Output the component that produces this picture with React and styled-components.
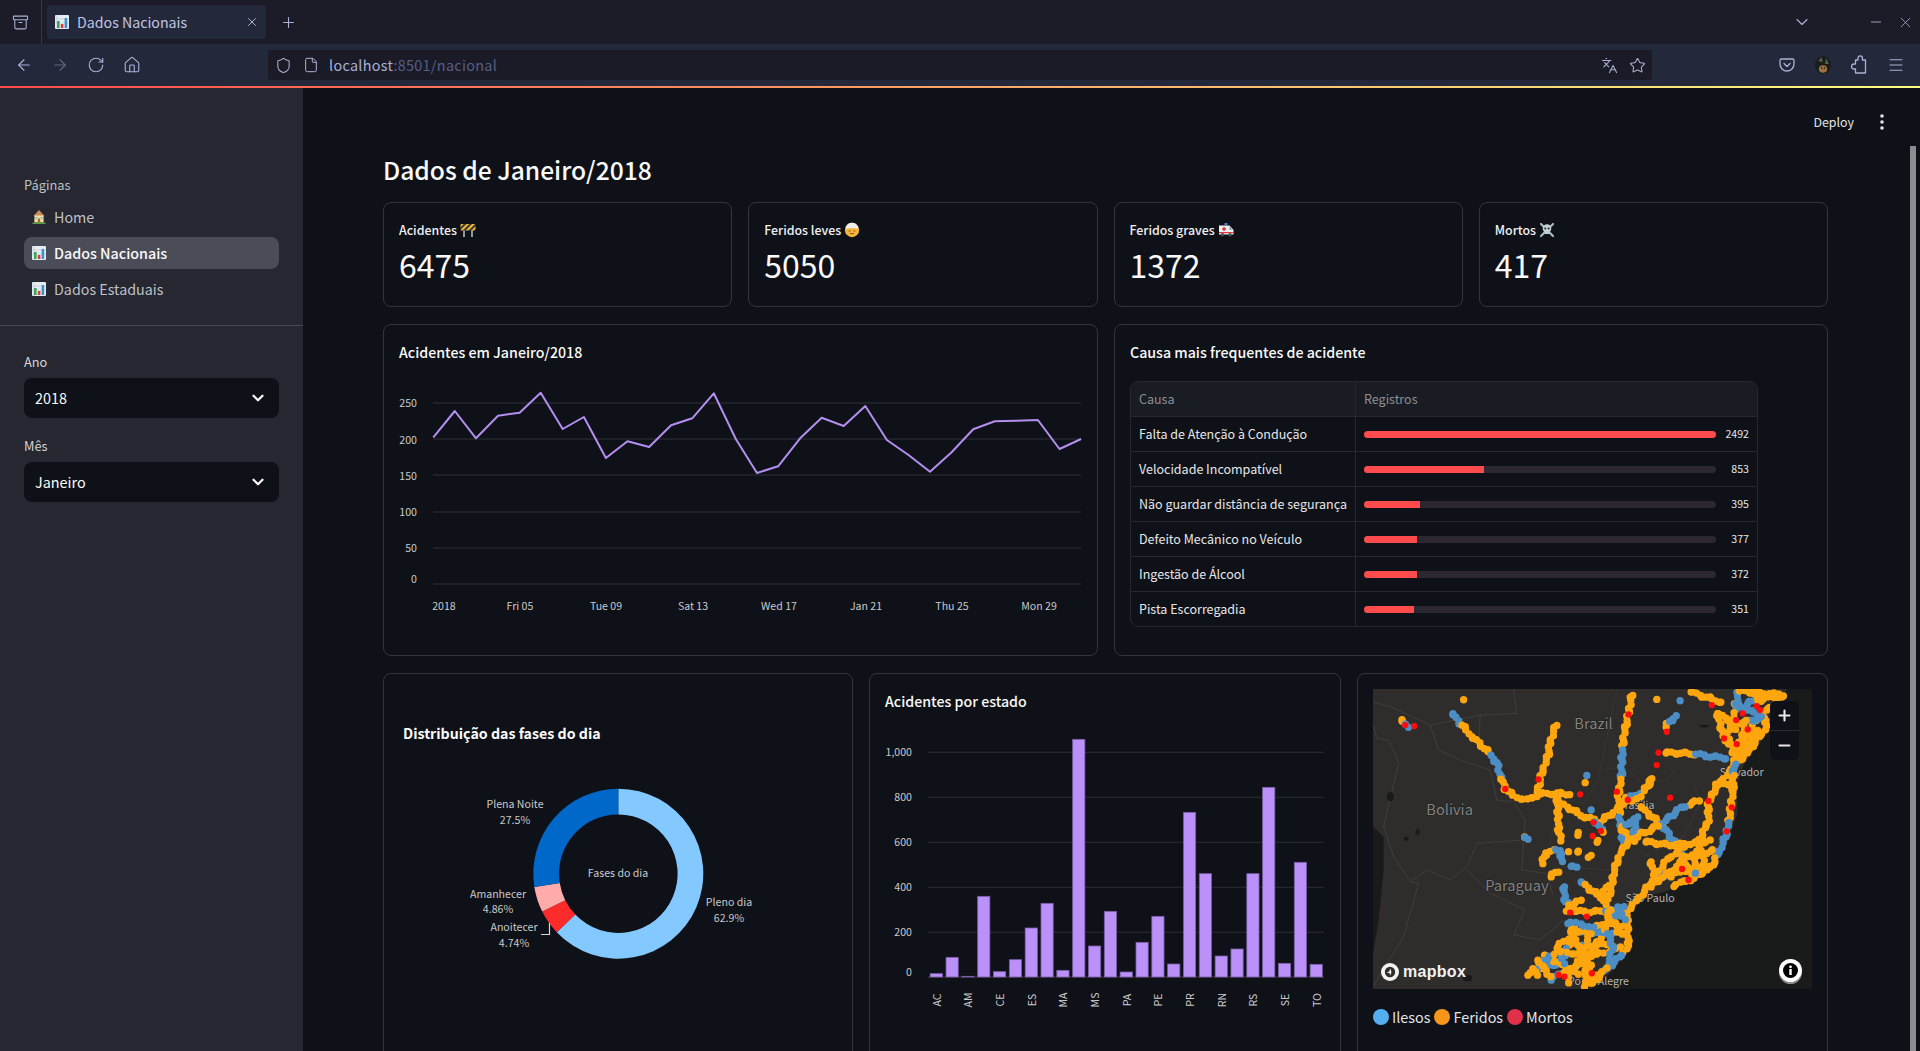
import React from 'react';
import styled, { createGlobalStyle } from 'styled-components';
import {
  ArrowLeft, ArrowRight, RotateCw, Home, Shield, File, Languages, Star,
  Menu, X, Plus, Minus, ChevronDown, Archive,
} from 'lucide-react';

const SANS = '"Noto Sans CJK SC", "Noto Sans", sans-serif';

const GlobalStyle = createGlobalStyle`
  html, body {
    margin: 0;
    height: 100%;
    overflow: hidden;
    background: #0e1117;
    font-family: ${SANS};
  }
`;

const Window = styled.div`
  display: flex;
  flex-direction: column;
  height: 100vh;
  overflow: hidden;
  color: #fafafa;
`;

/* browser chrome */
const TabBar = styled.div`
  display: flex;
  align-items: center;
  height: 44px;
  background: #1b1c28;
  color: #a9b1d6;
`;

const TabBarSide = styled.div`
  display: flex;
  align-items: center;
  justify-content: center;
  width: 42px;
  height: 100%;
  border-right: 1px solid #343747;
  margin-right: 5px;
  box-sizing: border-box;
`;

const Tab = styled.div`
  display: flex;
  align-items: center;
  gap: 7px;
  width: 219px;
  height: 34px;
  padding: 0 7px 0 7px;
  box-sizing: border-box;
  border-radius: 3px;
  background: #23283b;
  font-size: 14.2px;
  line-height: 20px;
  color: #c0c6e4;
`;

const TabTitle = styled.span`
  flex: 1;
  margin-top: -1px;
`;

const NewTab = styled.div`
  display: flex;
  margin-left: 14px;
`;

const WindowControls = styled.div`
  margin-left: auto;
  display: flex;
  align-items: center;
  padding-right: 6px;
`;

const WindowSlot = styled.span`
  display: flex;
  margin-left: ${p => p.$gap}px;
`;

const Toolbar = styled.div`
  display: flex;
  align-items: center;
  height: 42px;
  background: #24283b;
  color: #a9b1d6;
`;

const NavButtons = styled.div`
  display: flex;
  align-items: center;
  gap: 18px;
  padding-left: 15px;
  width: 268px;
  box-sizing: border-box;
`;

const NavButton = styled.span`
  display: flex;
  opacity: ${p => (p.$off ? 0.45 : 1)};
`;

const UrlBar = styled.div`
  display: flex;
  align-items: center;
  width: 1384px;
  height: 30px;
  padding: 0 6px 0 7px;
  box-sizing: border-box;
  border-radius: 3px;
  background: #1a1b26;
  font-size: 14.4px;
  letter-spacing: 0.3px;
`;

const UrlGap = styled.span`
  width: 11px;
`;

const UrlHost = styled.span`
  margin: -2px 0 0 10px;
  color: #a9b1d6;
`;

const UrlRest = styled.span`
  color: #565f89;
`;

const UrlActions = styled.div`
  margin-left: auto;
  display: flex;
  align-items: center;
  gap: 11px;
`;

const ToolbarRight = styled.div`
  margin-left: auto;
  display: flex;
  align-items: center;
  gap: 20px;
  padding-right: 15px;
`;

const Gradient = styled.div`
  height: 2px;
  background: linear-gradient(90deg, #ff4b4b, #fffd80);
`;

/* streamlit page */
const Body = styled.div`
  flex: 1;
  min-height: 0;
  display: flex;
`;

const Sidebar = styled.aside`
  flex: 0 0 303px;
  padding-top: 87px;
  box-sizing: border-box;
  background: #262730;
`;

const SideSection = styled.div`
  padding: 0 24px;
`;

const SideLabel = styled.div`
  margin-bottom: 6px;
  font-size: 12.8px;
  line-height: 20px;
  color: ${p => (p.$muted ? '#bfc0c5' : '#d5d6da')};
`;

const NavList = styled.nav`
  display: flex;
  flex-direction: column;
  gap: 4px;
`;

const NavItem = styled.div`
  display: flex;
  align-items: center;
  gap: 7px;
  height: 32px;
  padding-left: 7px;
  border-radius: 8px;
  background: ${p => (p.$active ? '#4a4c58' : 'transparent')};
  color: ${p => (p.$active ? '#fafafa' : '#bfc1c7')};
  font-size: 14.3px;
  font-weight: ${p => (p.$active ? 500 : 400)};
`;

const NavText = styled.span`
  margin-top: -2px;
`;

const SideDivider = styled.div`
  height: 1px;
  margin: 20px 0 26px;
  background: #4a4b55;
`;

const SelectBox = styled.div`
  display: flex;
  align-items: center;
  justify-content: space-between;
  height: 40px;
  margin-bottom: 18px;
  padding: 0 12px 0 11px;
  border-radius: 8px;
  background: #0e1117;
  font-size: 14.4px;
  color: #fafafa;
`;

const SelectValue = styled.span`
  margin-top: -2px;
`;

const Main = styled.main`
  position: relative;
  flex: 1;
  min-width: 0;
  padding: 61px 92px 0 80px;
  box-sizing: border-box;
`;

const TopActions = styled.div`
  position: absolute;
  top: 22px;
  right: 36px;
  display: flex;
  align-items: center;
  gap: 26px;
  font-size: 12.4px;
  line-height: 24px;
  color: #e3e3e6;
`;

const Scrollbar = styled.div`
  position: absolute;
  top: 58px;
  right: 4px;
  bottom: 0;
  width: 6px;
  background: #8c8d90;
`;

const PageTitle = styled.h1`
  margin: 0 0 13px;
  font-size: 24.6px;
  line-height: 40px;
  font-weight: 500;
`;

const Row = styled.div`
  display: grid;
  grid-template-columns: repeat(${p => p.$cols}, 1fr);
  gap: 16px;
  margin-bottom: 17px;
`;

const Card = styled.section`
  height: ${p => p.$height}px;
  padding: 15px;
  box-sizing: border-box;
  border: 1px solid #33353b;
  border-radius: 8px;
`;

const MetricLabel = styled.div`
  display: flex;
  align-items: center;
  gap: 3px;
  margin-top: 1px;
  font-size: 12.4px;
  line-height: 22px;
  font-weight: 500;
  color: #f0f0f2;
`;

const MetricValue = styled.div`
  font-size: 32px;
  line-height: 46px;
`;

const CardTitle = styled.h3`
  margin: ${p => p.$top || 0}px 0 0 ${p => p.$left || 0}px;
  font-size: 14.2px;
  line-height: 24px;
  font-weight: ${p => p.$weight || 500};
`;

const ChartSvg = styled.svg`
  display: block;
  margin-top: ${p => p.$top}px;
  font-family: ${SANS};
`;

const AxisText = styled.text`
  font-size: 10.6px;
  fill: #c9cace;
`;

/* table with progress bars */
const Table = styled.div`
  width: 626px;
  margin-top: 17px;
  border: 1px solid #26282e;
  border-radius: 8px;
  overflow: hidden;
`;

const TableRow = styled.div`
  display: grid;
  grid-template-columns: 224px 1fr;
  height: ${p => (p.$head ? 34 : 35)}px;
  box-sizing: border-box;
  border-top: ${p => (p.$head ? 0 : '1px solid #26282e')};
  background: ${p => (p.$head ? '#1a1c24' : 'transparent')};
  font-size: 12.5px;
  color: ${p => (p.$head ? '#8d8e93' : '#e6e7ea')};
`;

const TableCell = styled.div`
  display: flex;
  align-items: center;
  min-width: 0;
  padding: 0 8px;
  white-space: nowrap;
  border-left: ${p => (p.$second ? '1px solid #26282e' : 0)};
`;

const CellText = styled.span`
  margin-top: -2px;
`;

const BarTrack = styled.div`
  flex: 0 0 352px;
  height: 7px;
  border-radius: 4px;
  overflow: hidden;
  background: #2b2831;
`;

const BarFill = styled.div`
  height: 100%;
  background: #ff4b4b;
`;

const BarValue = styled.span`
  flex: 1;
  margin-top: -1px;
  text-align: right;
  font-size: 10.6px;
`;

/* map */
const MapBox = styled.div`
  position: relative;
  width: 439px;
  height: 300px;
  overflow: hidden;
  background: #191a1a;
`;

const MapSvg = styled.svg`
  display: block;
  font-family: ${SANS};
`;

const ZoomControls = styled.div`
  position: absolute;
  top: 12px;
  right: 13px;
  display: flex;
  flex-direction: column;
  width: 29px;
  border-radius: 5px;
  background: #0e1117;
  color: #e8e8e8;
`;

const ZoomButton = styled.div`
  display: flex;
  align-items: center;
  justify-content: center;
  height: 29px;
  & + & {
    border-top: 1px solid #2a2c31;
  }
`;

const MapLogo = styled.div`
  position: absolute;
  left: 8px;
  bottom: 8px;
  display: flex;
  align-items: center;
  gap: 4px;
  font-family: "Liberation Sans", sans-serif;
  font-size: 16px;
  font-weight: 700;
  line-height: 18px;
  letter-spacing: 0.3px;
  color: #f2f2f2;
`;

const MapInfo = styled.div`
  position: absolute;
  right: 10px;
  bottom: 7px;
  display: flex;
  border-radius: 50%;
  box-shadow: 0 2px 0 #8b8b8b;
`;

const Legend = styled.div`
  display: flex;
  align-items: center;
  margin-top: 20px;
  font-size: 14.4px;
  line-height: 16px;
  color: #e4e4e6;
`;

const LegendDot = styled.span`
  width: 16px;
  height: 16px;
  margin: 0 3px 0 ${p => (p.$first ? 0 : 4)}px;
  border-radius: 50%;
  background: ${p => p.$color};
`;

/* emoji, drawn */
const ChartEmoji = ({ size = 16 }) => (
  <svg width={size} height={size} viewBox="0 0 16 16">
    <rect x="1" y="1" width="14" height="14" rx="1" fill="#e6edf1" />
    <path d="M3 1v14M1 5h14M1 9h14" stroke="#b8c6d0" strokeWidth=".6" />
    <rect x="3" y="7" width="2.6" height="7" fill="#3aa55b" />
    <rect x="6.8" y="10" width="2.6" height="4" fill="#e03a3e" />
    <rect x="10.6" y="4" width="2.6" height="10" fill="#3e8fd0" />
  </svg>
);

const HouseEmoji = () => (
  <svg width="16" height="16" viewBox="0 0 16 16">
    <path d="M8 1l5.5 6H2.5z" fill="#c98d5a" />
    <rect x="3.4" y="6.5" width="9.2" height="7" fill="#f4dc9c" />
    <rect x="6.8" y="9.5" width="2.4" height="4" fill="#a8683f" />
    <rect x="4.4" y="8" width="1.8" height="1.8" fill="#6fb4dc" />
    <rect x="9.8" y="8" width="1.8" height="1.8" fill="#6fb4dc" />
    <rect x="1.5" y="13.5" width="13" height="1.5" fill="#5c9b47" />
  </svg>
);

const BarrierEmoji = () => (
  <svg width="16" height="16" viewBox="0 0 16 16">
    <defs>
      <pattern id="hazard" width="4" height="4" patternUnits="userSpaceOnUse" patternTransform="rotate(45)">
        <rect width="4" height="4" fill="#f5b92e" />
        <rect width="2" height="4" fill="#3a3a3a" />
      </pattern>
    </defs>
    <rect x="3" y="8" width="2" height="7" fill="#8d9aa4" />
    <rect x="11" y="8" width="2" height="7" fill="#8d9aa4" />
    <rect x="0.5" y="2" width="15" height="6.5" rx=".8" fill="url(#hazard)" />
  </svg>
);

const BandageEmoji = () => (
  <svg width="16" height="16" viewBox="0 0 16 16">
    <circle cx="8" cy="8" r="7.2" fill="#f5b53c" />
    <path d="M1.6 5.4C3 2 5.4.8 8 .8s5.200 1.200 6.400 4.600L13.600 7C10 5.600 6 5.600 2.400 7z" fill="#eeeeea" />
    <path d="M4.600 9h2M9.400 9h2M6 11.600h4" stroke="#7d5414" strokeWidth=".9" fill="none" />
  </svg>
);

const AmbulanceEmoji = () => (
  <svg width="17" height="16" viewBox="0 0 17 16">
    <rect x="6.500" y="1" width="3" height="2" fill="#4a82d8" />
    <path d="M1 3.500h10.500l4 4.500v4.500H1z" fill="#eef0f2" />
    <path d="M11.500 4.500l2.800 3.200h-2.800z" fill="#6c8da8" />
    <path d="M6 5v4M4 7h4" stroke="#e0353b" strokeWidth="1.500" />
    <rect x="1" y="10" width="14.500" height="1.200" fill="#e0353b" />
    <circle cx="4.500" cy="12.800" r="1.700" fill="#4a4f57" />
    <circle cx="12" cy="12.800" r="1.700" fill="#4a4f57" />
  </svg>
);

const SkullEmoji = () => (
  <svg width="16" height="16" viewBox="0 0 16 16">
    <path d="M2 2l12 12M14 2L2 14" stroke="#a8bbc4" strokeWidth="2.200" strokeLinecap="round" />
    <circle cx="8" cy="6.500" r="4.300" fill="#c4d2d8" />
    <rect x="5.800" y="9" width="4.400" height="3" fill="#c4d2d8" />
    <circle cx="6.300" cy="6.500" r="1.100" fill="#2c3338" />
    <circle cx="9.700" cy="6.500" r="1.100" fill="#2c3338" />
  </svg>
);

const PocketIcon = () => (
  <svg width="16" height="16" viewBox="0 0 16 16" fill="none" stroke="currentColor" strokeWidth="1.300">
    <path d="M2.500 2h11A1.500 1.500 0 0 1 15 3.500V7A7 7 0 0 1 1 7V3.500A1.500 1.500 0 0 1 2.500 2z" />
    <path d="M5 6.500l3 3 3-3" strokeLinecap="round" strokeLinejoin="round" />
  </svg>
);

const AvatarIcon = () => (
  <svg width="16" height="18" viewBox="0 0 16 18">
    <ellipse cx="8" cy="9" rx="8" ry="9" fill="#181d18" />
    <path d="M3 5l4-4 .5 5zM11 2l3 6-4 0z" fill="#56624e" />
    <ellipse cx="8" cy="13" rx="4.200" ry="3.800" fill="#9a7045" />
    <circle cx="6.500" cy="12" r=".8" fill="#1a120c" />
    <circle cx="9.500" cy="12" r=".8" fill="#1a120c" />
  </svg>
);

const ExtensionIcon = () => (
  <svg width="16" height="20" viewBox="0 0 16 20" fill="none" stroke="currentColor" strokeWidth="1.300" strokeLinejoin="round">
    <path d="M7 5V3a2.200 2.200 0 0 1 4.400 0v2h3.100v13H4.500v-4H3a2.500 2.500 0 0 1 0-5h1.500V5z" />
  </svg>
);

const KebabIcon = () => (
  <svg width="4" height="16" viewBox="0 0 4 16" fill="currentColor">
    <circle cx="2" cy="2" r="1.800" />
    <circle cx="2" cy="8" r="1.800" />
    <circle cx="2" cy="14" r="1.800" />
  </svg>
);

/* line chart, coordinates are page pixels */
const linePoints = [
  [116, 352], [163, 273], [209, 355], [257, 287], [304, 278], [350, 218], [398, 327], [444, 291],
  [492, 414], [539, 364], [586, 381], [634, 316], [680, 295], [727, 220], [775, 357], [821, 459],
  [867, 439], [915, 355], [962, 293], [1010, 318], [1057, 258], [1104, 360], [1151, 405], [1198, 455],
  [1245, 397], [1292, 328], [1339, 304], [1386, 302], [1433, 300], [1480, 387], [1527, 357],
].map(([x, y]) => `${(380 + x / 2.178).toFixed(1)},${(320 + y / 3).toFixed(1)}`).join(' ');

const lineTicks = [[250, 403, 403], [200, 439, 440], [150, 475, 476], [100, 512, 512], [50, 548, 548], [0, 584, 579]];
const lineDates = [['2018', 444], ['Fri 05', 520], ['Tue 09', 606], ['Sat 13', 693], ['Wed 17', 779], ['Jan 21', 866], ['Thu 25', 952], ['Mon 29', 1039]];

const LineChart = () => (
  <ChartSvg $top={6} width="683" height="270" viewBox="399 370 683 270">
    {lineTicks.map(([label, y, textY]) => (
      <g key={label}>
        <line x1="433" x2="1081" y1={y} y2={y} stroke="#31333b" />
        <AxisText x="417" y={textY + 4} textAnchor="end">{label}</AxisText>
      </g>
    ))}
    {lineDates.map(([label, x]) => (
      <AxisText key={label} x={x} y="610" textAnchor="middle">{label}</AxisText>
    ))}
    <polyline points={linePoints} fill="none" stroke="#b48ef0" strokeWidth="2" strokeLinejoin="round" />
  </ChartSvg>
);

/* donut */
const slices = [
  { from: 0, to: 62.9, color: '#83c9ff' },
  { from: 62.9, to: 67.64, color: '#ff2b2b' },
  { from: 67.64, to: 72.5, color: '#ffabab' },
  { from: 72.5, to: 100, color: '#0068c9' },
];

const polar = (r, pct) => {
  const a = (pct / 100) * Math.PI * 2;
  return `${(618.3 + r * Math.sin(a)).toFixed(2)} ${(873.7 - r * Math.cos(a)).toFixed(2)}`;
};

const slicePath = ({ from, to }) => {
  const big = to - from > 50 ? 1 : 0;
  return `M${polar(85, from)}A85 85 0 ${big} 1 ${polar(85, to)}L${polar(59.3, to)}A59.3 59.3 0 ${big} 0 ${polar(59.3, from)}Z`;
};

const donutLabels = [
  ['Plena Noite', 515, 804], ['27.5%', 515, 820],
  ['Amanhecer', 498, 894], ['4.86%', 498, 909],
  ['Anoitecer', 514, 927], ['4.74%', 514, 943],
  ['Pleno dia', 729, 902], ['62.9%', 729, 918],
  ['Fases do dia', 618, 873],
];

const DonutChart = () => (
  <ChartSvg $top={5} width="438" height="240" viewBox="399 750 438 240">
    {slices.map(s => <path key={s.color} d={slicePath(s)} fill={s.color} />)}
    {donutLabels.map(([label, x, y]) => (
      <AxisText key={label} x={x} y={y + 4} textAnchor="middle">{label}</AxisText>
    ))}
    <path d="M549.500 923v11.500h-8.500" fill="none" stroke="#d6d7da" strokeWidth="1.200" />
  </ChartSvg>
);

/* bars */
const barTops = [911, 862, 919, 679, 905, 869, 774, 700, 901, 208, 828, 724, 906, 817, 739, 882, 427, 611, 858, 837, 611, 352, 880, 577, 883];
const barTicks = [['1,000', 752.3], ['800', 797.3], ['600', 842.3], ['400', 887.3], ['200', 932.3]];
const stateLabels = ['AC', 'AM', 'CE', 'ES', 'MA', 'MS', 'PA', 'PE', 'PR', 'RN', 'RS', 'SE', 'TO'];

const BarChart = () => (
  <ChartSvg $top={3} width="440" height="300" viewBox="886 716 440 300">
    {barTicks.map(([label, y]) => (
      <g key={label}>
        <line x1="929" x2="1325" y1={y} y2={y} stroke="#2c2e35" />
        <AxisText x="913" y={y + 4} textAnchor="end">{label}</AxisText>
      </g>
    ))}
    <line x1="929" x2="1325" y1="977" y2="977" stroke="#3a3c44" />
    <AxisText x="913" y="976" textAnchor="end">0</AxisText>
    {barTops.map((top, i) => {
      const y = 670 + top / 3;
      return (
        <rect key={i} x={931.2 + i * 15.83} y={y} width="12.200" height={977 - y} fill="#bb90f9" stroke="#7a5ea8" strokeWidth=".8" />
      );
    })}
    {stateLabels.map((label, i) => {
      const x = 937.300 + i * 31.66;
      return (
        <AxisText key={label} x={x} y="1000" textAnchor="middle" dominantBaseline="central" transform={`rotate(-90 ${x} 1000)`}>
          {label}
        </AxisText>
      );
    })}
  </ChartSvg>
);

/* map drawing, coordinates taken at 3x */
const roads = [
  [[152, 148], [165, 165], [178, 175]],
  [[305, 130], [335, 165], [370, 205], [410, 240], [440, 280], [455, 330], [465, 355], [490, 378], [530, 390], [570, 372], [620, 370], [665, 372]],
  [[617, 165], [600, 215], [595, 250], [575, 310], [565, 350], [555, 380]],
  [[620, 385], [625, 450], [625, 490], [640, 520]],
  [[620, 395], [660, 415], [700, 440], [750, 455], [800, 420], [830, 385], [880, 365], [910, 320]],
  [[845, 75], [835, 130], [822, 190], [815, 260], [815, 310], [810, 340], [805, 380], [810, 450], [815, 490], [820, 530]],
  [[945, 248], [1020, 250], [1090, 260], [1140, 265]],
  [[945, 170], [985, 130]],
  [[1165, 60], [1155, 130], [1130, 200], [1160, 250], [1145, 300], [1100, 345], [1075, 400], [1075, 450], [1050, 510], [1030, 600], [1020, 625]],
  [[1165, 62], [1300, 75], [1240, 130], [1250, 170], [1190, 250], [1150, 290], [1150, 350], [1140, 430], [1130, 490], [1110, 540], [1085, 590], [1030, 625], [960, 650]],
  [[1100, 130], [1125, 210], [1160, 240]],
  [[1215, 150], [1190, 200], [1170, 230]],
  [[1020, 65], [1125, 100]],
  [[870, 410], [930, 460], [985, 530], [1015, 600], [1030, 625]],
  [[1045, 392], [990, 415], [930, 465], [880, 490], [820, 490]],
  [[860, 440], [850, 490], [810, 550], [790, 610], [785, 650], [770, 700]],
  [[885, 515], [960, 525], [1030, 520], [1090, 510]],
  [[1000, 530], [950, 570], [910, 630], [870, 680], [835, 720]],
  [[900, 575], [920, 630], [950, 610], [1010, 600]],
  [[640, 650], [645, 695], [680, 725], [740, 725], [780, 720], [820, 740]],
  [[690, 635], [750, 680], [780, 640]],
  [[750, 680], [770, 710]],
  [[690, 690], [640, 730]],
  [[780, 720], [760, 790], [720, 850], [700, 930]],
  [[830, 720], [835, 830], [800, 870], [760, 905], [720, 950]],
  [[670, 770], [660, 820], [630, 880], [560, 895]],
  [[690, 785], [780, 790], [830, 790]],
  [[690, 830], [790, 820]],
  [[660, 780], [720, 900], [720, 950]],
  [[580, 855], [630, 880], [690, 920]],
  [[770, 740], [810, 770], [830, 770]],
  [[600, 620], [630, 600]],
  [[575, 580], [590, 545], [630, 540], [635, 585]],
  [[520, 500], [540, 515]],
  [[730, 455], [770, 490]],
  [[680, 495], [695, 485]],
  [[720, 555], [715, 575]],
  [[680, 545], [695, 548]],
  [[660, 588], [690, 597]],
  [[740, 510], [748, 530]],
  [[895, 345], [910, 320]],
  // southern mesh
  [[560, 895], [600, 855], [650, 845], [700, 860], [760, 850], [820, 830]],
  [[620, 830], [680, 790], [740, 770], [800, 750]],
  [[720, 790], [700, 850], [670, 900]],
  [[760, 770], [790, 830], [770, 890]],
  [[650, 760], [690, 760], [740, 780]],
  [[600, 930], [650, 900], [700, 880], [740, 890]],
  [[560, 870], [610, 930]],
  [[530, 915], [570, 905]],
  [[545, 895], [570, 930]],
  [[660, 900], [650, 950]],
  [[780, 760], [830, 700]],
  [[800, 710], [830, 760]],
  [[640, 880], [620, 820]],
  [[700, 950], [730, 920], [780, 890]],
  // sao paulo, rio, minas
  [[900, 650], [960, 605], [1030, 600], [1075, 580]],
  [[960, 620], [1000, 560], [1060, 550], [1100, 540]],
  [[1050, 540], [1070, 600]],
  [[990, 570], [1040, 620]],
  [[810, 480], [860, 440]],
  [[860, 500], [850, 525]],
  [[810, 400], [880, 380]],
  // northeast
  [[1100, 130], [1160, 160], [1215, 150], [1250, 130]],
  [[1150, 100], [1240, 140]],
  [[1190, 100], [1300, 70]],
  [[1200, 60], [1240, 100]],
  [[1185, 150], [1175, 210], [1140, 260]],
  [[1220, 180], [1170, 260]],
  [[1100, 345], [1150, 340]],
];

const singleDots = [
  [340, 89, 0], [920, 88, 0], [990, 92, 1], [705, 338, 0], [710, 316, 1], [723, 420, 1], [655, 545, 0], [1157, 178, 0],
];

const redDots = [
  [192, 168], [165, 165], [835, 133], [565, 328], [465, 357], [690, 373], [800, 365], [833, 390], [960, 383], [730, 457],
  [752, 483], [728, 498], [925, 248], [920, 285], [950, 185], [1085, 105], [1178, 130], [1158, 150], [1193, 178], [1122, 205],
  [1075, 393], [1145, 412], [1130, 484], [996, 597], [1220, 108], [1230, 120], [625, 915], [643, 920], [725, 910], [1160, 222], [1015, 630],
  [710, 740], [660, 728],
];

const DOT_COLORS = ['#ffa60f', '#4c8ec4'];

// the southern mesh is bluer and less dense than the long highways
const isSouth = r => r >= 41 && r < 55;

const roadDots = roads.flatMap((road, r) => {
  const dots = [];
  let n = 0;
  for (let s = 0; s < road.length - 1; s++) {
    const [x1, y1] = road[s];
    const [x2, y2] = road[s + 1];
    const count = Math.max(1, Math.round(Math.hypot(x2 - x1, y2 - y1) / (isSouth(r) ? 13 : 10)));
    for (let k = 0; k < count; k++) {
      n += 1;
      const t = k / count;
      const blue = Math.sin(n * 0.27 + r * 1.7) + Math.sin(n * 0.083 + r) > (isSouth(r) ? 0.3 : 0.85);
      dots.push([x1 + (x2 - x1) * t + Math.sin(n * 2.1) * 3.5, y1 + (y2 - y1) * t + Math.cos(n * 1.3) * 3.5, blue ? 1 : 0]);
    }
  }
  return dots;
});

const allDots = [...roadDots, ...singleDots];

const cityLabels = [
  ['Brazil', 730, 160, 44, '#84837f'],
  ['Bolivia', 298, 420, 44, '#84837f'],
  ['Paraguay', 500, 648, 44, '#84837f'],
  ['Salvador', 1175, 306, 32, '#b5b4b3'],
  ['Brasília', 858, 405, 32, '#b5b4b3'],
  ['São Paulo', 900, 686, 32, '#b5b4b3'],
  ['Porto Alegre', 745, 935, 32, '#b5b4b3'],
];

const MapDrawing = () => (
  <MapSvg width="439" height="300" viewBox="68 57 1318 900">
    <path
      d="M68 470L68 57H1312L1262 130L1252 190L1182 282L1162 340L1162 430L1132 520L1092 590L1032 632L952 662L882 682L832 730L842 830L792 900L722 957H68V850L85 750L100 600L100 500Z"
      fill="#2e2d2c"
    />
    <g fill="none" stroke="#474645" strokeWidth="2">
      <path d="M68 95L120 110L240 165L265 240L330 270L420 300L440 390L490 395L525 450L520 510L380 520L350 590L300 630L230 600L180 635L130 560L100 470L145 280L115 210L80 205L68 165" />
      <path d="M520 510L515 600L590 610L610 680" />
      <path d="M350 600L420 670L525 720L490 795L570 810L640 750" />
      <path d="M180 635L205 640L160 800L68 950" />
      <path d="M490 57L500 130L390 135L240 165" />
      <path d="M390 135L385 220" />
    </g>
    <g fill="none" stroke="#3c3b3a" strokeWidth="2">
      <path d="M800 57L770 200L745 330L700 400L620 385" />
      <path d="M1020 250L950 330L880 340L820 290L760 300" />
      <path d="M620 420L600 520L640 590L780 600" />
      <path d="M1030 330L1050 400L1000 500L880 560" />
      <path d="M640 690L760 640L800 620" />
      <path d="M660 770L840 780" />
    </g>
    <g fill="#1a1a1a">
      <ellipse cx="120" cy="380" rx="10" ry="14" />
      <ellipse cx="202" cy="486" rx="6" ry="10" />
      <ellipse cx="168" cy="506" rx="8" ry="6" />
      <ellipse cx="1063" cy="168" rx="15" ry="4" />
      <ellipse cx="352" cy="925" rx="14" ry="10" />
    </g>
    {cityLabels.map(([label, x, y, size, color]) => (
      <text key={label} x={x} y={y + size * 0.35} textAnchor="middle" fontSize={size} fill={color} stroke="#1c1c1c" strokeWidth="3" paintOrder="stroke">
        {label}
      </text>
    ))}
    {allDots.map(([x, y, c], i) => (
      <circle key={i} cx={x} cy={y} r="11" fill={DOT_COLORS[c]} />
    ))}
    {redDots.map(([x, y], i) => (
      <circle key={i} cx={x} cy={y} r="9.500" fill="#ff0d0d" />
    ))}
  </MapSvg>
);

const MapboxMark = () => (
  <svg width="18" height="18" viewBox="0 0 18 18">
    <circle cx="9" cy="9" r="9" fill="#f2f2f2" />
    <circle cx="9" cy="9" r="5.200" fill="#2e2d2c" />
    <path d="M9.500 5.500L8 8.500 5.500 9.500 8.500 10 9 12.500 10.500 9.500z" fill="#f2f2f2" />
  </svg>
);

const InfoMark = () => (
  <svg width="23" height="23" viewBox="0 0 23 23">
    <circle cx="11.500" cy="11.500" r="11.500" fill="#fff" />
    <circle cx="11.500" cy="11.500" r="7.500" fill="#000" />
    <rect x="10.300" y="10" width="2.400" height="6" fill="#fff" />
    <circle cx="11.500" cy="7.800" r="1.400" fill="#fff" />
  </svg>
);

const causes = [
  ['Falta de Atenção à Condução', 2492],
  ['Velocidade Incompatível', 853],
  ['Não guardar distância de segurança', 395],
  ['Defeito Mecânico no Veículo', 377],
  ['Ingestão de Álcool', 372],
  ['Pista Escorregadia', 351],
];

const metrics = [
  { label: 'Acidentes', value: 6475, icon: <BarrierEmoji /> },
  { label: 'Feridos leves', value: 5050, icon: <BandageEmoji /> },
  { label: 'Feridos graves', value: 1372, icon: <AmbulanceEmoji /> },
  { label: 'Mortos', value: 417, icon: <SkullEmoji /> },
];

const App = () => (
  <Window>
    <GlobalStyle />
    <TabBar>
      <TabBarSide><Archive size={17} strokeWidth={1.5} /></TabBarSide>
      <Tab>
        <ChartEmoji />
        <TabTitle>Dados Nacionais</TabTitle>
        <X size={14} strokeWidth={1.5} />
      </Tab>
      <NewTab><Plus size={17} strokeWidth={1.5} /></NewTab>
      <WindowControls>
        <WindowSlot $gap={0}><ChevronDown size={20} strokeWidth={1.3} /></WindowSlot>
        <WindowSlot $gap={56}><Minus size={16} strokeWidth={1.3} /></WindowSlot>
        <WindowSlot $gap={13}><X size={17} strokeWidth={1.1} /></WindowSlot>
      </WindowControls>
    </TabBar>
    <Toolbar>
      <NavButtons>
        <NavButton><ArrowLeft size={18} strokeWidth={1.5} /></NavButton>
        <NavButton $off><ArrowRight size={18} strokeWidth={1.5} /></NavButton>
        <NavButton><RotateCw size={18} strokeWidth={1.5} /></NavButton>
        <NavButton><Home size={18} strokeWidth={1.5} /></NavButton>
      </NavButtons>
      <UrlBar>
        <Shield size={17} strokeWidth={1.5} />
        <UrlGap />
        <File size={16} strokeWidth={1.5} />
        <UrlHost>localhost<UrlRest>:8501/nacional</UrlRest></UrlHost>
        <UrlActions>
          <Languages size={17} strokeWidth={1.5} />
          <Star size={17} strokeWidth={1.5} />
        </UrlActions>
      </UrlBar>
      <ToolbarRight>
        <PocketIcon />
        <AvatarIcon />
        <ExtensionIcon />
        <Menu size={18} strokeWidth={1.5} />
      </ToolbarRight>
    </Toolbar>
    <Gradient />
    <Body>
      <Sidebar>
        <SideSection>
          <SideLabel $muted>Páginas</SideLabel>
          <NavList>
            <NavItem><HouseEmoji /><NavText>Home</NavText></NavItem>
            <NavItem $active><ChartEmoji /><NavText>Dados Nacionais</NavText></NavItem>
            <NavItem><ChartEmoji /><NavText>Dados Estaduais</NavText></NavItem>
          </NavList>
        </SideSection>
        <SideDivider />
        <SideSection>
          <SideLabel>Ano</SideLabel>
          <SelectBox><SelectValue>2018</SelectValue><ChevronDown size={18} strokeWidth={3} /></SelectBox>
          <SideLabel>Mês</SideLabel>
          <SelectBox><SelectValue>Janeiro</SelectValue><ChevronDown size={18} strokeWidth={3} /></SelectBox>
        </SideSection>
      </Sidebar>
      <Main>
        <TopActions>
          Deploy
          <KebabIcon />
        </TopActions>
        <Scrollbar />
        <PageTitle>Dados de Janeiro/2018</PageTitle>
        <Row $cols={4}>
          {metrics.map(m => (
            <Card key={m.label} $height={105}>
              <MetricLabel>{m.label}{m.icon}</MetricLabel>
              <MetricValue>{m.value}</MetricValue>
            </Card>
          ))}
        </Row>
        <Row $cols={2}>
          <Card $height={332}>
            <CardTitle>Acidentes em Janeiro/2018</CardTitle>
            <LineChart />
          </Card>
          <Card $height={332}>
            <CardTitle>Causa mais frequentes de acidente</CardTitle>
            <Table>
              <TableRow $head>
                <TableCell><CellText>Causa</CellText></TableCell>
                <TableCell $second><CellText>Registros</CellText></TableCell>
              </TableRow>
              {causes.map(([name, total]) => (
                <TableRow key={name}>
                  <TableCell><CellText>{name}</CellText></TableCell>
                  <TableCell $second>
                    <BarTrack>
                      <BarFill style={{ width: `${(total / 2492) * 100}%` }} />
                    </BarTrack>
                    <BarValue>{total}</BarValue>
                  </TableCell>
                </TableRow>
              ))}
            </Table>
          </Card>
        </Row>
        <Row $cols={3}>
          <Card $height={420}>
            <CardTitle $top={32} $left={4} $weight={700}>Distribuição das fases do dia</CardTitle>
            <DonutChart />
          </Card>
          <Card $height={420}>
            <CardTitle>Acidentes por estado</CardTitle>
            <BarChart />
          </Card>
          <Card $height={420}>
            <MapBox>
              <MapDrawing />
              <ZoomControls>
                <ZoomButton><Plus size={17} strokeWidth={3} /></ZoomButton>
                <ZoomButton><Minus size={17} strokeWidth={3} /></ZoomButton>
              </ZoomControls>
              <MapLogo><MapboxMark />mapbox</MapLogo>
              <MapInfo><InfoMark /></MapInfo>
            </MapBox>
            <Legend>
              <LegendDot $first $color="#55aef0" />Ilesos
              <LegendDot $color="#f7941a" />Feridos
              <LegendDot $color="#e0304a" />Mortos
            </Legend>
          </Card>
        </Row>
      </Main>
    </Body>
  </Window>
);

export default App;
